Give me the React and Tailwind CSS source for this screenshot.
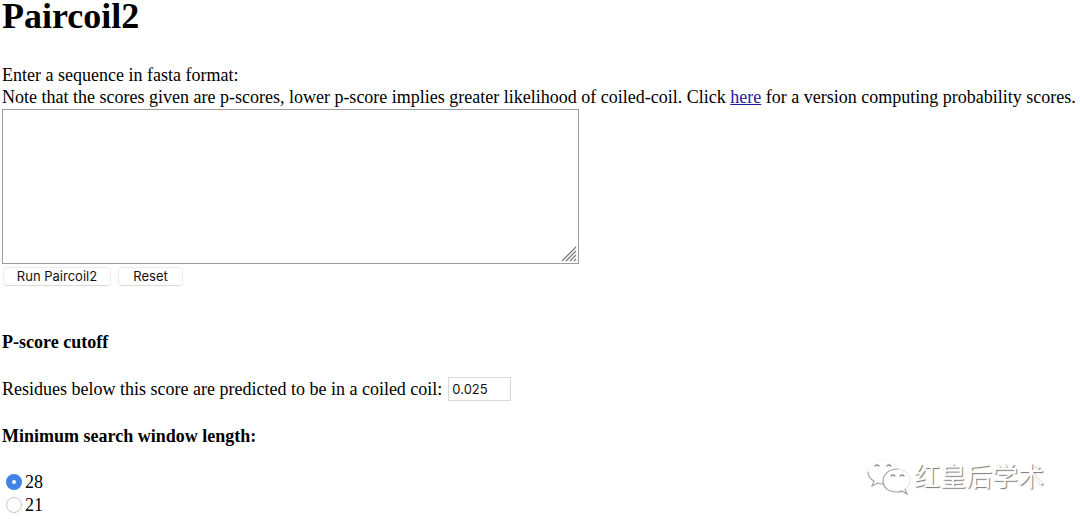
import React from 'react';

const buttonClass =
  "flex h-[19px] items-center justify-center rounded-[4px] border border-[#ececec] border-b-[#dadada] bg-white pb-px font-['Inter','Liberation_Sans',sans-serif] text-[13px] leading-4 text-[#111]";

const radioClass =
  'h-4 w-4 appearance-none rounded-full border border-[#c6c6c6] bg-white checked:border-[6px] checked:border-[#3f83e6]';

function WindowOption({ value, defaultChecked }) {
  return (
    <label className="flex items-center gap-[3px]">
      <input
        type="radio"
        name="window"
        value={value}
        defaultChecked={defaultChecked}
        className={radioClass}
      />
      {value}
    </label>
  );
}

function ResizeGrip() {
  return (
    <svg
      className="pointer-events-none absolute right-[2px] bottom-[2px]"
      width="16"
      height="16"
      viewBox="0 0 16 16"
      fill="none"
      stroke="#7b7b7b"
      strokeWidth="1.3"
      aria-hidden="true"
    >
      <path d="M1 15L15 1M5 15L15 5M9 15L15 9M13 15L15 13" />
    </svg>
  );
}

function Watermark() {
  return (
    <div className="absolute right-[36px] bottom-[30px] flex items-center gap-[3px]">
      <svg width="44" height="36" viewBox="0 0 44 36" fill="none" strokeLinecap="round" aria-hidden="true">
        <path d="M1 13C1 6 8 1 16 1S30 5 31 10" stroke="#f6f6f6" />
        <path d="M1 13C1 17 3 20 7 22L5 27L11 24C13 25 15 25 17 25" stroke="#a5a5a5" strokeWidth="1.2" />
        <path d="M31 10C22 10 16 15 16 22C16 29 22 33 30 33C32 33 34 33 35 32L40 35L38 30" stroke="#a0a0a0" strokeWidth="1.2" />
        <path d="M31 10C38 11 43 15 43 21C43 25 41 28 38 30" stroke="#e2e2e2" />
        <path d="M8 7Q10 5 12 7M20 7Q22 5 24 7M24 17Q26 15 28 17M33 17Q35 15 37 17" stroke="#909090" strokeWidth="1.3" />
      </svg>
      <span className="pb-1 font-['Noto_Sans_CJK_SC',sans-serif] text-[26px] leading-9 text-white [text-shadow:1px_1px_1px_#777]">
        红皇后学术
      </span>
    </div>
  );
}

export default function App() {
  return (
    <main className="relative min-h-screen bg-white pl-[2px] font-['Liberation_Serif','Times_New_Roman',serif] text-[18px] leading-[22px] text-black">
      <h1 className="text-[36px] leading-8 font-bold">Paircoil2</h1>
      <form className="pt-8" onSubmit={(e) => e.preventDefault()}>
        <label htmlFor="sequence" className="block">
          Enter a sequence in fasta format:
        </label>
        <p className="whitespace-nowrap">
          Note that the scores given are p-scores, lower p-score implies greater likelihood of coiled-coil. Click{' '}
          <a href="#probability" className="text-[#1a1aa6] underline">
            here
          </a>{' '}
          for a version computing probability scores.
        </p>
        <div className="relative mt-px w-[577px] max-w-full">
          <textarea
            id="sequence"
            name="sequence"
            className="block h-[155px] w-full resize-none border border-[#9c9c9c] bg-white p-1 font-mono text-[14px] outline-none"
          />
          <ResizeGrip />
        </div>
        <div className="mt-[3px] flex gap-[7px] pl-px">
          <button type="submit" className={`${buttonClass} w-[108px]`}>
            Run Paircoil2
          </button>
          <button type="reset" className={`${buttonClass} w-[65px]`}>
            Reset
          </button>
        </div>

        <h2 className="mt-[45px] font-bold">P-score cutoff</h2>
        <div className="mt-6 flex items-center gap-[6px]">
          <label htmlFor="cutoff">Residues below this score are predicted to be in a coiled coil:</label>
          <input
            id="cutoff"
            name="cutoff"
            type="text"
            defaultValue="0.025"
            className="h-6 w-[63px] border border-[#d9d9d9] bg-white px-[3px] font-['Inter','Liberation_Sans',sans-serif] text-[13px] text-[#111] outline-none"
          />
        </div>

        <fieldset className="mt-6">
          <legend className="font-bold">Minimum search window length:</legend>
          <div className="flex flex-col gap-px pt-6 pl-1">
            <WindowOption value="28" defaultChecked />
            <WindowOption value="21" />
          </div>
        </fieldset>
      </form>
      <Watermark />
    </main>
  );
}
